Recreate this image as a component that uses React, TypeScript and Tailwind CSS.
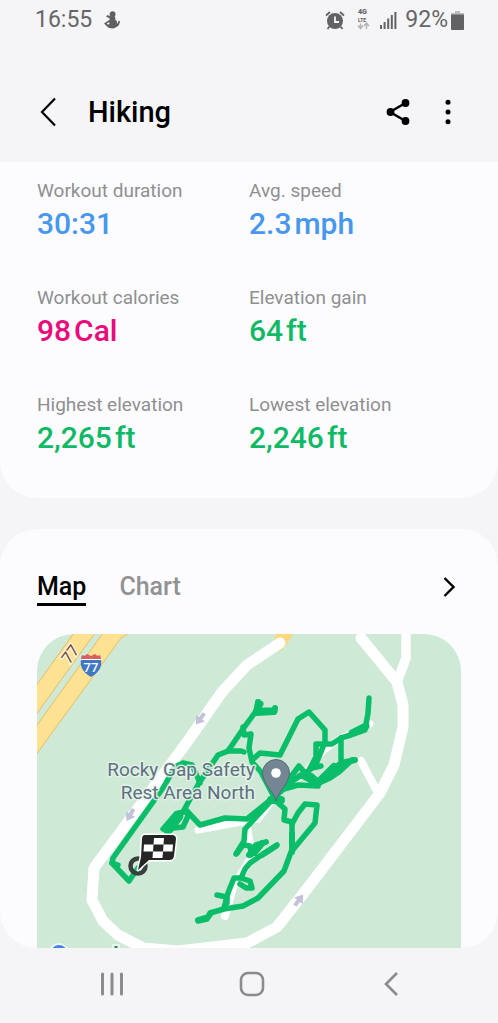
import React, { useState } from 'react';

interface Stat {
  label: string;
  value: string;
  unit?: string;
  color: string;
}

const stats: Stat[] = [
  { label: 'Workout duration', value: '30:31', color: 'text-[#4797ee]' },
  { label: 'Avg. speed', value: '2.3', unit: 'mph', color: 'text-[#4797ee]' },
  { label: 'Workout calories', value: '98', unit: 'Cal', color: 'text-[#ea0a7c]' },
  { label: 'Elevation gain', value: '64', unit: 'ft', color: 'text-[#0fb966]' },
  { label: 'Highest elevation', value: '2,265', unit: 'ft', color: 'text-[#0fb966]' },
  { label: 'Lowest elevation', value: '2,246', unit: 'ft', color: 'text-[#0fb966]' },
];

const tabs = ['Map', 'Chart'];

const StatusBar = () => (
  <div className="flex h-10 items-center justify-between pl-[35px] pr-[34px] text-[23px] leading-6 text-[#666668]">
    <div className="flex items-center gap-3">
      <span>16:55</span>
      <svg width="16" height="18" viewBox="0 0 16 18" fill="#5f5f61" aria-hidden="true">
        <circle cx="8.600" cy="3.200" r="2.900" />
        <path d="M2 5.600 3.500 4 7 5.500h4l.5 3.500c1.500 1 2 2.400 1.600 4 .8-.5 1.100-1.600 1.300-3.300l1.500.3c0 3-1 5-4 6.200-1.500 1.600-6 1.600-8 0L0 12.400l5.700-3.600-.3-1.600z" />
        <path d="m2.600 12.600 2.600-1.400.4 1.600-1.200 1z" fill="#f5f5f7" />
      </svg>
    </div>
    <div className="flex items-center">
      <svg width="20" height="19" viewBox="0 0 20 19" aria-hidden="true">
        <circle cx="10" cy="10" r="8" fill="#626264" />
        <path d="M1 4.500 5 1M19 4.500 15 1M4.500 15.500 2.500 18M15.500 15.500l2 2.500" stroke="#626264" strokeWidth="1.800" fill="none" />
        <path d="M10 5.500V11h4" stroke="#f5f5f7" strokeWidth="1.800" fill="none" />
      </svg>
      <svg className="ml-3 overflow-visible" width="13" height="20" viewBox="0 0 13 20" aria-hidden="true">
        <text x="1" y="4" fontSize="7" fontWeight="900" fill="#626264">4G</text>
        <text x="1" y="12" fontSize="5" fontWeight="700" fill="#626264">LTE</text>
        <path d="M3.500 13.500V18M1 15.500l2.500 3 2.500-3M9.500 19v-5.500M7 16l2.500-3 2.500 3" stroke="#b5b5b7" strokeWidth="1.500" fill="none" />
      </svg>
      <svg className="ml-[10px]" width="17" height="18" viewBox="0 0 17 18" fill="#626264" aria-hidden="true">
        <path d="M0 14h2v4H0zM3.600 11h2v7h-2zM7.200 7.500h2V18h-2zM10.800 4h2v14h-2zM14.400 1h2v17h-2z" />
      </svg>
      <span className="ml-2">92%</span>
      <svg className="ml-[3px]" width="13" height="19" viewBox="0 0 13 19" aria-hidden="true">
        <path d="M4 0h5v2h4v3H0V2h4z" fill="#bcbcbe" />
        <rect y="3.500" width="13" height="15.500" rx=".8" fill="#626264" />
      </svg>
    </div>
  </div>
);

const Header = () => (
  <header className="flex items-center pt-9 pb-[14px] pl-9 pr-9">
    <button aria-label="Back" className="flex h-[72px] w-6 items-center justify-center">
      <svg width="16" height="30" viewBox="0 0 16 30" fill="none" stroke="#000" strokeWidth="2.200">
        <path d="M15 1.500 2 15l13 13.500" />
      </svg>
    </button>
    <h1 className="ml-7 flex-1 text-[29px] leading-9 font-medium text-black">Hiking</h1>
    <button aria-label="Share" className="flex size-7 items-center justify-center">
      <svg width="24" height="26" viewBox="0 0 24 26" fill="#000">
        <path d="M19.500 4 4 13l15.500 9" fill="none" stroke="#000" strokeWidth="2.500" />
        <circle cx="4.500" cy="13" r="3.900" />
        <circle cx="19.500" cy="4" r="3.900" />
        <circle cx="19.500" cy="22" r="3.900" />
      </svg>
    </button>
    <button aria-label="More options" className="ml-[22px] flex size-7 items-center justify-center">
      <svg width="6" height="26" viewBox="0 0 6 26" fill="#000">
        <circle cx="3" cy="3.200" r="2.500" />
        <circle cx="3" cy="13" r="2.500" />
        <circle cx="3" cy="22.800" r="2.500" />
      </svg>
    </button>
  </header>
);

const RoadArrow = ({ x, y, angle }: { x: number; y: number; angle: number }) => (
  <path
    d="M-7-2h6V-5.500L7 0-1 5.500V2h-6z"
    fill="#c3c2da"
    transform={`translate(${x} ${y}) rotate(${angle})`}
  />
);

const RouteMap = () => (
  <svg
    viewBox="37 634 424 314"
    className="block h-auto w-full rounded-t-[37px] bg-[#cee9d6]"
    role="img"
    aria-label="Route map"
  >
    {/* interstate */}
    <g fill="#fde293" stroke="#e9bd62" strokeWidth="1">
      <path d="M30 694 74 633h21L30 723z" />
      <path d="M30 735 103 633h26l-8 5L30 763z" />
    </g>
    <path d="m277 633-4 9 9 9 12-18zM355 633h6v8z" fill="#fdd77f" />

    {/* roads */}
    <g fill="none" stroke="#fff" strokeWidth="11" strokeLinecap="round" strokeLinejoin="round">
      <path d="M280 643 247 665 222 692 190 738 94 868 92 900 103 921 118 935 143 948 178 951 247 943 277 927 310 885 380 793 394 765 403 727V705L397 682 361 638" />
      <path d="M397 682 406 658V630" strokeWidth="9.500" />
      <path d="M361 761 379 795" strokeWidth="8" />
      <path d="M370 724 338 740 323 751 306 772 280 791 258 819 198 830" strokeWidth="7" />
      <path d="M247 828 252 857 233 887 225 916" strokeWidth="8" />
    </g>
    <RoadArrow x={200} y={719} angle={127} />
    <RoadArrow x={130} y={815} angle={120} />
    <RoadArrow x={299} y={900} angle={-53} />

    {/* recorded track */}
    <g fill="none" stroke="#0abd68" strokeWidth="5.500" strokeLinecap="round" strokeLinejoin="round">
      <path d="M138 868 129 881 112 863 113 858 163 788 175 767 183 763 192 765 200 783" />
      <path d="M112 863l6 2" />
      <path d="M258 702 256 711 243 729 228 751 218 755 210 767 199 783 184 810" />
      <path d="M258 702l-1 11 17-1 1-4" strokeWidth="6" />
      <path d="M257 710l3-6M264 711h10" strokeWidth="7" />
      <path d="M228 751l13 0 3 1M243 727l1 8 7-1-2 14 3 14 9 10 12 23" />
      <path d="M252 760 260 753 280 755 298 719 309 712 325 730V742L316 764" />
      <path d="M369 698 368 713 365 730 351 735 341 738 332 744 316 744V757L310 768" />
      <path d="M366 726 352 733" strokeWidth="7" />
      <path d="M341 738V760" />
      <path d="M355 760 341 763 333 770 317 784 301 775 288 784 275 797" strokeWidth="6" />
      <path d="M352 760 339 772 330 778 319 783M302 776 312 768 321 766M287 782 299 766 306 774" />
      <path d="M334 767 318 783 311 777" strokeWidth="8" />
      <path d="M275 795 284 789 298 785 318 786" />
      <path d="M187 811 176 814 163 829 183 827 188 816 186 810 200 825 225 818 247 819 274 797" />
      <path d="M178 816 168 829" strokeWidth="11" />
      <path d="M271 800h10" strokeWidth="8" />
      <path d="M277 802 285 809 284 820 292 822V851" />
      <path d="M292 824 298 813 305 804 317 805 315 823 291 852 284 871 258 898 243 906 224 909 210 913 207 919 198 921" />
      <path d="M292 834v18M198 920l10-3 3-4" strokeWidth="6" />
      <path d="M272 800 245 829 244 841 236 854M243 845l7 1 1 9 7-6 5-6" />
      <path d="M262 843 255 853M277 845 263 854 250 863 245 869 241 878 234 878 228 893 224 908" />
      <path d="M266 842 256 845 249 855M237 853l5-7M276 846 262 855" strokeWidth="6" />
      <path d="M217 895l10 2M227 897v6M241 878l9 3 2 7-6 0-6-4" />
    </g>

    {/* interstate signs */}
    <text
      x="70"
      y="660"
      textAnchor="middle"
      fontSize="16"
      fill="#713c35"
      stroke="#fff3d5"
      strokeWidth="3"
      paintOrder="stroke"
      transform="rotate(-53 70 654)"
    >
      77
    </text>
    <path d="M82 656q3 2 5-1l4 2 4-2q2 3 5 1 5 13-9 21-14-8-9-21z" fill="#3c78c6" />
    <path d="M82 655q3 2 5-1l4 2 4-2q2 3 5 1l1 4H81z" fill="#d95f5f" />
    <path d="M81 659.500h20" stroke="#fff" />
    <text x="91" y="672" textAnchor="middle" fontSize="13" fontWeight="500" fill="#fff">77</text>

    <g
      textAnchor="end"
      fontSize="19"
      fill="#5c7080"
      stroke="#e6f4ea"
      strokeOpacity=".85"
      strokeWidth="3"
      strokeLinejoin="round"
      paintOrder="stroke"
    >
      <text x="255" y="776">Rocky Gap Safety</text>
      <text x="255" y="799">Rest Area North</text>
    </g>

    {/* place pin */}
    <path
      d="M276 801c-2-9-13-17-13.500-28a13.500 13.500 0 0 1 27 0c-.5 11-11.500 19-13.500 28z"
      fill="#748594"
      stroke="#53687a"
      strokeWidth="1"
    />
    <circle cx="276" cy="773" r="4.800" fill="#fff" />

    {/* finish flag */}
    <circle cx="138" cy="866" r="7.500" fill="none" stroke="#39413e" strokeWidth="4.500" />
    <path
      d="M145 835h27q4 0 4 4l-2 17q-.5 4-4.500 4H149l-11 10 3-13 1-18q0-4 3-4z"
      fill="#252525"
      stroke="#fff"
      strokeWidth="3"
      strokeLinejoin="round"
      paintOrder="stroke"
    />
    <path d="M154 838h10l-.5 6.500h-10zM144 844.500h9.500l-.5 7h-9.500zM163.500 844.500h9.500l-.5 7H163zM153 851.500h10l-.5 6.500h-10z" fill="#fff" />

    {/* provider logo */}
    <circle cx="59" cy="953" r="8" fill="#4a80e8" stroke="#eaf8f0" strokeWidth="4" paintOrder="stroke" />
    <path d="M112 944h8v5h-8z" fill="#e6f4ea" />
    <path d="M114.500 946h3v3h-3z" fill="#35835a" />
  </svg>
);

const NavBar = () => (
  <nav className="flex h-[75px] items-center justify-between pl-[98px] pr-[93px] pb-1">
    <button aria-label="Recent apps" className="flex size-7 items-center justify-center">
      <svg width="24" height="24" viewBox="0 0 24 24" stroke="#8b8b8d" strokeWidth="3" strokeLinecap="round">
        <path d="M2.500 2v20M12 2v20M21.500 2v20" />
      </svg>
    </button>
    <button aria-label="Home" className="flex size-7 items-center justify-center">
      <svg width="26" height="26" viewBox="0 0 26 26" fill="none" stroke="#8b8b8d" strokeWidth="2.600">
        <rect x="2" y="2" width="22" height="22" rx="7" />
      </svg>
    </button>
    <button aria-label="Back" className="flex size-7 items-center justify-center">
      <svg width="16" height="26" viewBox="0 0 16 26" fill="none" stroke="#8b8b8d" strokeWidth="2.600">
        <path d="M14 2 3 13l11 11" />
      </svg>
    </button>
  </nav>
);

const App: React.FC = () => {
  const [active, setActive] = useState('Map');

  return (
    <div className="min-h-screen bg-[#f5f5f7] font-['Roboto',sans-serif]">
      <StatusBar />
      <Header />
      <main>
        <section className="grid grid-cols-2 gap-y-[41px] rounded-b-[37px] bg-[#fcfcfe] px-[37px] pt-[17px] pb-[39px]">
          {stats.map((stat) => (
            <div key={stat.label}>
              <p className="text-[19px] leading-6 text-[#8f8f91]">{stat.label}</p>
              <p className={`flex gap-[3px] text-[30px] leading-[42px] font-medium ${stat.color}`}>
                <span>{stat.value}</span>
                {stat.unit && <span>{stat.unit}</span>}
              </p>
            </div>
          ))}
        </section>

        <section className="mt-[31px] overflow-hidden rounded-[37px] bg-[#fcfcfe] px-[37px] pt-[42px]">
          <div className="mb-7 flex items-start justify-between">
            <div role="tablist" className="flex gap-[33px]">
              {tabs.map((tab) => (
                <button
                  key={tab}
                  role="tab"
                  aria-selected={active === tab}
                  onClick={() => setActive(tab)}
                  className={`border-b-3 text-[25px] leading-8 font-medium ${
                    active === tab ? 'border-black text-black' : 'border-transparent text-[#929294]'
                  }`}
                >
                  {tab}
                </button>
              ))}
            </div>
            <button aria-label="Open map" className="flex h-8 w-6 items-center justify-center">
              <svg width="12" height="20" viewBox="0 0 12 20" fill="none" stroke="#000" strokeWidth="2.400">
                <path d="m1.500 1 9 9-9 9" />
              </svg>
            </button>
          </div>
          <RouteMap />
        </section>
      </main>
      <NavBar />
    </div>
  );
};

export default App;
